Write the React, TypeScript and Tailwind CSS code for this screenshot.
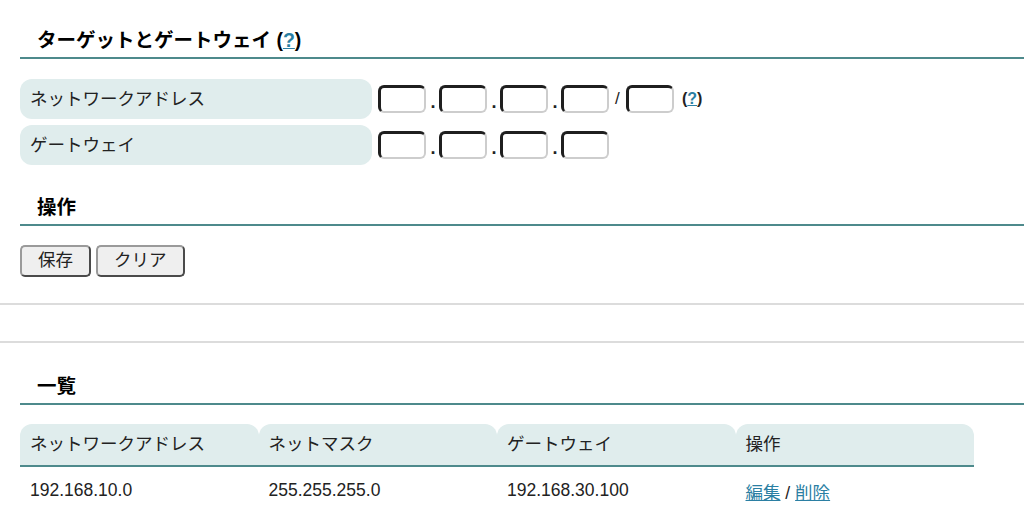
import type { ReactNode } from "react";

const font = { fontFamily: '"Liberation Sans", "Noto Sans CJK JP", sans-serif' };

const SectionTitle = ({ children, className = "" }: { children: ReactNode; className?: string }) => (
  <h2
    className={`text-[19.5px] font-bold leading-[28px] pl-[17px] pb-[3px] border-b-2 border-[#4e8a8c] text-black ${className}`}
  >
    {children}
  </h2>
);

const Help = () => (
  <span className="font-bold">
    (<a href="#" className="text-[#2b7fa3] underline">?</a>)
  </span>
);

const Octet = () => (
  <input
    type="text"
    className="w-[48px] h-[28px] rounded-[6px] border-t-[3px] border-l-[3px] border-b-2 border-r-2 border-t-[#1f1f1f] border-l-[#1f1f1f] border-b-[#cdcdcd] border-r-[#cdcdcd] bg-white outline-none"
  />
);

const Dot = () => (
  <span className="self-end w-[6px] text-center text-[18px] font-bold leading-none pb-[2px] ml-[4px] mr-[3px]">.</span>
);

const FieldRow = ({ label, children }: { label: string; children: ReactNode }) => (
  <div className="flex items-center">
    <div className="w-[352px] h-[40px] rounded-[12px] bg-[#e0eded] px-[10px] flex items-center text-[17.5px] text-[#222]">
      {label}
    </div>
    <div className="flex items-center ml-[6px]">{children}</div>
  </div>
);

const Button = ({ children }: { children: ReactNode }) => (
  <button className="h-[32px] px-4 rounded-[5px] border-2 border-t-[#9a9a9a] border-l-[#9a9a9a] border-b-[#4a4a4a] border-r-[#4a4a4a] bg-[#efefef] text-[17.5px] text-[#222] leading-none">
    {children}
  </button>
);

const columns = ["ネットワークアドレス", "ネットマスク", "ゲートウェイ", "操作"];

const routes = [{ network: "192.168.10.0", mask: "255.255.255.0", gateway: "192.168.30.100" }];

export default function App() {
  return (
    <div className="w-[1024px] h-[522px] overflow-hidden bg-white text-[#222]" style={font}>
      <div className="pl-[20px]">
        <SectionTitle className="pt-[26px]">
          ターゲットとゲートウェイ <Help />
        </SectionTitle>

        <div className="mt-[20px] flex flex-col gap-[6px]">
          <FieldRow label="ネットワークアドレス">
            <Octet />
            <Dot />
            <Octet />
            <Dot />
            <Octet />
            <Dot />
            <Octet />
            <span className="w-[5px] text-[17px] mx-[6px]">/</span>
            <Octet />
            <span className="ml-[8px] text-[16px]">
              <Help />
            </span>
          </FieldRow>
          <FieldRow label="ゲートウェイ">
            <Octet />
            <Dot />
            <Octet />
            <Dot />
            <Octet />
            <Dot />
            <Octet />
          </FieldRow>
        </div>

        <SectionTitle className="mt-[28px]">操作</SectionTitle>

        <div className="mt-[19px] flex gap-[5px]">
          <Button>保存</Button>
          <Button>クリア</Button>
        </div>
      </div>

      <div className="mt-[26px] h-[2px] bg-[#dcdcdc]" />
      <div className="mt-[36px] h-[2px] bg-[#dcdcdc]" />

      <div className="pl-[20px]">
        <SectionTitle className="mt-[29px]">一覧</SectionTitle>

        <table className="mt-[19px] w-[954px] border-collapse text-[17.5px]">
          <thead>
            <tr className="border-b-2 border-[#4e8a8c]">
              {columns.map((c) => (
                <th key={c} className="w-[238px] h-[41px] p-0 text-left font-normal align-middle">
                  <div className="h-[41px] rounded-t-[12px] bg-[#e0eded] px-[10px] flex items-center">{c}</div>
                </th>
              ))}
            </tr>
          </thead>
          <tbody>
            {routes.map((r) => (
              <tr key={r.network}>
                <td className="h-[46px] px-[10px] pt-[2px]">{r.network}</td>
                <td className="px-[10px] pt-[2px]">{r.mask}</td>
                <td className="px-[10px] pt-[2px]">{r.gateway}</td>
                <td className="px-[10px] pt-[8px]">
                  <a href="#" className="text-[#2b7fa3] underline">編集</a> /{" "}
                  <a href="#" className="text-[#2b7fa3] underline">削除</a>
                </td>
              </tr>
            ))}
          </tbody>
        </table>
      </div>
    </div>
  );
}
